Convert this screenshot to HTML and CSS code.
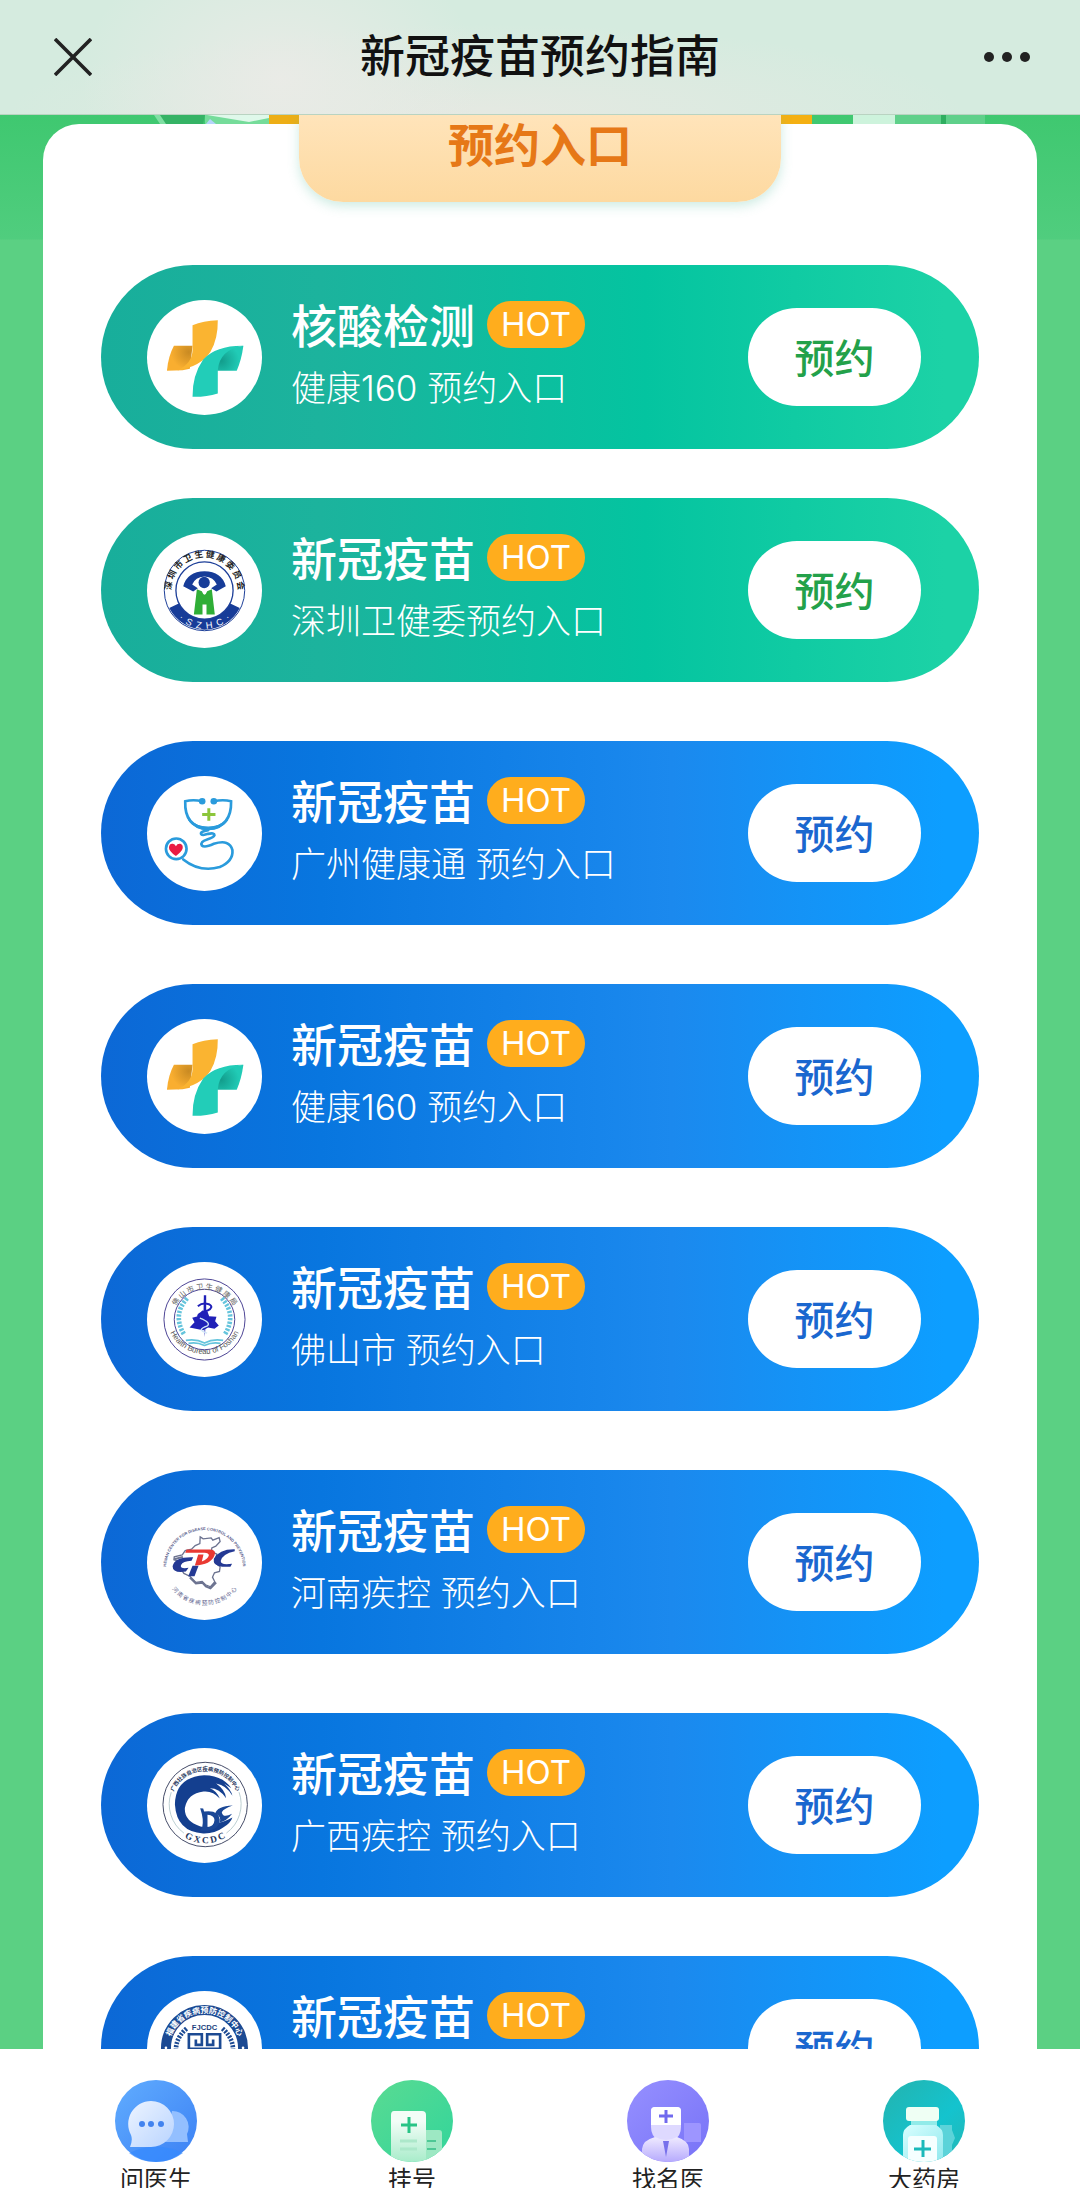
FILE: index.html
```
<!DOCTYPE html>
<html lang="zh-CN">
<head>
    <meta charset="UTF-8">
    <meta name="viewport" content="width=device-width, initial-scale=1.0">
    <title>新冠疫苗预约指南</title>
    <link rel="stylesheet" href="styles.css">
</head>
<body>
    <!-- Shared logo and gradients -->
    <svg class="defs" aria-hidden="true">
        <defs>
            <radialGradient id="goldFold" cx="0.85" cy="0.25" r="0.7">
                <stop offset="0" stop-color="#c98a22"/>
                <stop offset="1" stop-color="#f9ae30"/>
            </radialGradient>
            <radialGradient id="tealFold" cx="0.15" cy="0.6" r="0.7">
                <stop offset="0" stop-color="#129c8b"/>
                <stop offset="1" stop-color="#21cbb6"/>
            </radialGradient>
            <symbol id="logo160" viewBox="21 29 346 346">
                <path d="M102 167 H158 L150 236 L128 240 L81 242 Q85 198 102 167Z" fill="url(#goldFold)"/>
                <path d="M158 105 Q190 91 234 90 Q235 145 212 185 Q183 230 112 241 Q157 220 158 180Z" fill="#fab431"/>
                <path d="M311 167 Q305 211 291 242 H232 V180Z" fill="url(#tealFold)"/>
                <path d="M311 167 Q240 178 234 240 V310 Q198 321 158 320 Q157 256 190 208 Q230 166 311 167Z" fill="#22cdb8"/>
            </symbol>
        </defs>
    </svg>

    <header class="topbar">
        <button class="icon-btn" aria-label="关闭">
            <svg width="38" height="38" viewBox="0 0 38 38"><path d="M1 1 L37 37 M37 1 L1 37" stroke="#222" stroke-width="3.6" fill="none"/></svg>
        </button>
        <h1>新冠疫苗预约指南</h1>
        <button class="icon-btn" aria-label="更多">
            <svg width="48" height="12" viewBox="0 0 48 12" fill="#222"><circle cx="6" cy="6" r="5"/><circle cx="24" cy="6" r="5"/><circle cx="42" cy="6" r="5"/></svg>
        </button>
    </header>

    <main class="content">
        <!-- Bottom edge of the banner -->
        <svg class="banner" viewBox="0 0 1080 9" preserveAspectRatio="none" aria-hidden="true">
            <path d="M154 0h8l6 9h-8z" fill="#7fe0a3"/>
            <path d="M160 0h45l-2 9h-37z" fill="#35b365"/>
            <path d="M205 0h64v9h-64z" fill="#75dc9a"/>
            <path d="M207 0h62v3l-20 4z" fill="#dff8ea"/>
            <path d="M206 9l4-5 6 5z" fill="#b5d4fb"/>
            <path d="M269 0h40v9h-40z" fill="#edae16"/>
            <path d="M771 0h41v9h-41z" fill="#f4b012"/>
            <path d="M853 0h42v9h-42z" fill="#cdf3dc"/>
            <path d="M895 0h90v9h-90z" fill="#5fd08a"/>
            <path d="M941 0h5v9h-5z" fill="#2fae60"/>
        </svg>

        <section class="card">
            <h2 class="tab">预约入口</h2>

            <article class="entry green">
                <svg class="logo"><use href="#logo160"/></svg>
                <div class="info">
                    <h3>核酸检测 <span class="hot">HOT</span></h3>
                    <p>健康160 预约入口</p>
                </div>
                <button class="btn">预约</button>
            </article>

            <article class="entry green">
                <svg class="logo" viewBox="21 24 346 346">
                    <circle cx="194" cy="197" r="121" fill="#fff" stroke="#1d3f99" stroke-width="3"/>
                    <path d="M88 250 A119 119 0 0 0 300 250 L270 235 A85 85 0 0 1 118 235Z" fill="#173c98"/>
                    <circle cx="194" cy="197" r="86" fill="#fff" stroke="#1d3f99" stroke-width="4"/>
                    <path id="szTop" d="M99 228 A100 100 0 1 1 289 228" fill="none"/>
                    <text class="ring-cn sz"><textPath href="#szTop" startOffset="50%">深 圳 市 卫 生 健 康 委 员 会</textPath></text>
                    <path id="szBottom" d="M82 214 A113 113 0 0 0 306 214" fill="none"/>
                    <text class="ring-en szhc"><textPath href="#szBottom" startOffset="50%">·  S  Z  H  C  ·</textPath></text>
                    <path d="M130 184 Q142 140 194 139 Q246 140 258 184 L230 200 L214 190 L231 179 Q222 157 194 155 Q166 157 157 179 L174 190 L160 200Z" fill="#173c98"/>
                    <circle cx="193" cy="173" r="17" fill="#173c98"/>
                    <path d="M171 193 L186 199 Q194 220 202 199 L216 193 L225 269 H200 V239 H188 V269 H162Z" fill="#2fae36"/>
                </svg>
                <div class="info">
                    <h3>新冠疫苗 <span class="hot">HOT</span></h3>
                    <p>深圳卫健委预约入口</p>
                </div>
                <button class="btn">预约</button>
            </article>

            <article class="entry">
                <svg class="logo" viewBox="21 29 346 346" fill="none" stroke="#2a9bdc" stroke-linecap="round">
                    <path d="M187 105 Q160 99 136 105 Q133 183 205 188 Q276 183 274 105 Q250 99 222 105" stroke-width="8"/>
                    <path d="M146 160 Q166 190 205 190 Q244 190 264 160 Q240 183 205 183 Q168 183 146 160Z" fill="#2a9bdc" stroke-width="4"/>
                    <circle cx="187" cy="105" r="10" fill="#2a9bdc" stroke="none"/>
                    <circle cx="222" cy="105" r="10" fill="#2a9bdc" stroke="none"/>
                    <path d="M207 126 V164 M187 145 H227" stroke="#8cc63a" stroke-width="9" stroke-linecap="butt"/>
                    <path d="M205 192 Q180 196 184 204 Q188 209 205 203 Q224 199 224 207 Q222 214 202 220 Q180 227 186 238 Q194 246 222 233 Q270 218 278 252 Q281 285 240 303 Q180 320 130 280" stroke-width="8"/>
                    <circle cx="109" cy="248" r="31" stroke-width="8"/>
                    <path d="M108 270 Q86 254 87 243 Q89 231 99 233 Q105 234 108 240 Q112 232 121 233 Q131 236 128 248 Q124 258 108 270Z" fill="#ea1b43" stroke="none"/>
                </svg>
                <div class="info">
                    <h3>新冠疫苗 <span class="hot">HOT</span></h3>
                    <p>广州健康通 预约入口</p>
                </div>
                <button class="btn">预约</button>
            </article>

            <article class="entry">
                <svg class="logo"><use href="#logo160"/></svg>
                <div class="info">
                    <h3>新冠疫苗 <span class="hot">HOT</span></h3>
                    <p>健康160 预约入口</p>
                </div>
                <button class="btn">预约</button>
            </article>

            <article class="entry">
                <svg class="logo" viewBox="21 22 346 346" fill="none">
                    <circle cx="194" cy="195" r="122" stroke="#4d4596" stroke-width="3"/>
                    <circle cx="194" cy="195" r="91" stroke="#4d4596" stroke-width="3"/>
                    <path id="fsTop" d="M98 182 A98 98 0 0 1 290 182"/>
                    <text class="ring-cn fs"><textPath href="#fsTop" startOffset="50%">佛 山 市 卫 生 健 康 局</textPath></text>
                    <path id="fsBottom" d="M82 206 A114 114 0 0 0 306 206"/>
                    <text class="ring-en fsen"><textPath href="#fsBottom" startOffset="50%">Health Bureau of Foshan</textPath></text>
                    <path d="M142 131 Q97 180 132 239" stroke="#65c4dc" stroke-width="14" stroke-dasharray="7 4"/>
                    <path d="M246 131 Q291 180 256 239" stroke="#65c4dc" stroke-width="14" stroke-dasharray="7 4"/>
                    <path d="M138 258 Q168 252 194 266 Q220 252 250 258 M146 267 Q170 262 194 273 Q218 262 242 267" stroke="#65c4dc" stroke-width="5"/>
                    <path d="M149 219 L164 203 L157 190 L174 185 L187 168 L203 171 L208 185 L230 187 L226 200 L237 213 L224 223 L205 219 L190 227Z" fill="#2020b8"/>
                    <path d="M192 122 H199 V180 L195 248 L191 180Z" fill="#2020b8"/>
                    <path d="M174 155 Q188 143 207 149 Q224 158 203 168 Q170 178 176 187 Q180 192 207 194" stroke="#2020b8" stroke-width="6"/>
                    <path d="M180 191 Q214 204 203 214 Q185 220 184 226 Q188 232 202 236" stroke="#cfe5f7" stroke-width="4"/>
                </svg>
                <div class="info">
                    <h3>新冠疫苗 <span class="hot">HOT</span></h3>
                    <p>佛山市 预约入口</p>
                </div>
                <button class="btn">预约</button>
            </article>

            <article class="entry">
                <svg class="logo" viewBox="21 29 346 346" fill="none">
                    <path id="hnTop" d="M80 242 A116 116 0 1 1 308 242"/>
                    <text class="ring-en hnen"><textPath href="#hnTop" startOffset="50%">HENAN CENTER FOR DISEASE CONTROL AND PREVENTION</textPath></text>
                    <path id="hnBottom" d="M84 264 A125 125 0 0 0 304 264"/>
                    <text class="ring-cn hn"><textPath href="#hnBottom" startOffset="50%">河 南 省 疾 病 预 防 控 制 中 心</textPath></text>
                    <path d="M181 125 L190 131 L214 128 L219 135 L238 127 L241 139 L228 153 L216 158 L215 169 L231 177 L225 202 L241 215 L239 229 L224 233 L218 246 L225 260 L212 275 L197 269 L187 259 L168 262 L151 244 L132 235 L119 215 L121 199 L102 194 L103 185 L127 179 L136 166 L155 162 L166 151 L180 145Z" fill="#fff" stroke="#6c7390" stroke-width="4"/>
                    <path d="M103 192 L129 185 M150 247 L168 265 L188 263 L198 274 L212 280 L229 262" stroke="#6c7390" stroke-width="6"/>
                    <path d="M160 186 Q104 184 98 213 Q98 235 138 229 L146 218 Q120 222 123 210 Q129 198 155 197Z" fill="#243994"/>
                    <path d="M158 212 H176 L164 243 H145Z" fill="#243994"/>
                    <path d="M140 163 H211 Q231 165 224 181 Q213 209 165 211 L175 178 H191 L186 199 Q204 192 207 181 Q207 173 194 173 H136Z" fill="#e93932"/>
                    <path d="M285 162 Q238 161 222 191 Q218 212 247 215 H272 L277 206 Q241 211 243 197 Q248 176 285 168Z" fill="#243994"/>
                </svg>
                <div class="info">
                    <h3>新冠疫苗 <span class="hot">HOT</span></h3>
                    <p>河南疾控 预约入口</p>
                </div>
                <button class="btn">预约</button>
            </article>

            <article class="entry">
                <svg class="logo" viewBox="21 22 346 346" fill="none">
                    <circle cx="196" cy="192" r="127" stroke="#454c68" stroke-width="3"/>
                    <path d="M94 155 A108 108 0 0 0 132 278 M298 155 A108 108 0 0 1 260 278" stroke="#bccfd1" stroke-width="3"/>
                    <path id="gxTop" d="M101 154 A103 103 0 0 1 291 154"/>
                    <text class="ring-cn gx"><textPath href="#gxTop" startOffset="50%">广西壮族自治区疾病预防控制中心</textPath></text>
                    <path id="gxBottom" d="M90 240 A116 116 0 0 0 302 240"/>
                    <text class="ring-en gxen"><textPath href="#gxBottom" startOffset="50%">G X C D C</textPath></text>
                    <path d="M275 143 Q247 104 193 104 Q106 110 105 192 Q110 274 190 279 Q225 280 249 262 Q273 248 278 231 Q252 244 239 246 Q216 264 182 258 Q132 242 135 202 Q143 159 191 153 Q219 150 240 174 Q230 150 210 143 Q239 143 259 173 Q257 149 229 129 Q260 134 278 166 Q273 146 253 129Z" fill="#143f8f"/>
                    <path d="M181 203 L190 204 L193 213 Q237 207 240 238 Q239 269 199 271 H181 L187 261 Q193 238 181 203Z M203 223 V261 Q223 258 224 239 Q224 225 203 223Z" fill="#1a4796" fill-rule="evenodd"/>
                    <path d="M279 195 Q231 197 226 220 Q247 228 239 246 Q260 243 277 220 Q249 234 246 215 Q252 204 279 195Z" fill="#1a4796"/>
                </svg>
                <div class="info">
                    <h3>新冠疫苗 <span class="hot">HOT</span></h3>
                    <p>广西疾控 预约入口</p>
                </div>
                <button class="btn">预约</button>
            </article>

            <article class="entry">
                <svg class="logo" viewBox="0 0 346 346" fill="none">
                    <circle cx="173" cy="173" r="116" stroke="#1c4a93" stroke-width="30"/>
                    <path id="fjTop" d="M66 173 A107 107 0 0 1 280 173"/>
                    <text class="ring-cn fj"><textPath href="#fjTop" startOffset="50%">福建省疾病预防控制中心</textPath></text>
                    <circle cx="57" cy="171" r="4" fill="#fff"/>
                    <circle cx="289" cy="171" r="4" fill="#fff"/>
                    <text class="ring-en fjen" x="173" y="116">FJCDC</text>
                    <path d="M119 113 Q76 150 91 205 M227 113 Q270 150 255 205" stroke="#1c4a93" stroke-width="14" stroke-dasharray="6 4"/>
                    <path d="M126 186 V130 H165 V162 H147 V146 M220 186 V130 H181 V162 H199 V146 M126 174 H220 M141 186 H205 V220 H141Z" stroke="#1c4a93" stroke-width="8"/>
                </svg>
                <div class="info">
                    <h3>新冠疫苗 <span class="hot">HOT</span></h3>
                    <p>福建疾控 预约入口</p>
                </div>
                <button class="btn">预约</button>
            </article>
        </section>
    </main>

    <nav class="bottom-nav">
        <a href="#">
            <svg viewBox="0 0 82 82">
                <defs>
                    <linearGradient id="blueBg" x1="0" y1="0" x2="1" y2="1"><stop offset="0" stop-color="#61adff"/><stop offset="1" stop-color="#3b80f4"/></linearGradient>
                    <linearGradient id="bubble" x1="0" y1="0" x2="1" y2="1"><stop offset="0" stop-color="#edf4ff"/><stop offset="1" stop-color="#b9d4ff"/></linearGradient>
                </defs>
                <circle cx="41" cy="41" r="41" fill="url(#blueBg)"/>
                <path d="M14 73 Q41 60 68 73 Q56 82 41 82 Q25 82 14 73Z" fill="#358aff" opacity="0.7"/>
                <path d="M57 31 A16 16 0 0 1 72 54 L73 62 H50Z" fill="#93bfff"/>
                <path d="M36 21 A23 23 0 1 1 36 67 H15 Q18 60 16 55 A23 23 0 0 1 36 21Z" fill="url(#bubble)"/>
                <g fill="#4283ef"><circle cx="27" cy="44" r="3"/><circle cx="36" cy="44" r="3"/><circle cx="46" cy="44" r="3"/></g>
            </svg>
            <span>问医生</span>
        </a>
        <a href="#">
            <svg viewBox="0 0 82 82">
                <defs>
                    <linearGradient id="greenBg" x1="0" y1="0" x2="1" y2="1"><stop offset="0" stop-color="#5adb92"/><stop offset="1" stop-color="#32d59b"/></linearGradient>
                    <linearGradient id="paper" x1="0" y1="0" x2="0" y2="1"><stop offset="0.2" stop-color="#f3fdf7"/><stop offset="1" stop-color="#a8ecca"/></linearGradient>
                    <clipPath id="round"><circle cx="41" cy="41" r="41"/></clipPath>
                </defs>
                <g clip-path="url(#round)">
                    <path d="M0 0h82v82H0z" fill="url(#greenBg)"/>
                    <path d="M54 50h14q3 0 3 3v29H54z" fill="#9de8c3"/>
                    <path d="M23 31h28q4 0 4 4v47H20V35q0-4 3-4z" fill="url(#paper)"/>
                    <path d="M38 37v16M30 45h16" stroke="#28c486" stroke-width="3"/>
                    <path d="M29 61h17M29 69h17" stroke="#ace8ca" stroke-width="3"/>
                    <path d="M56 61h9M56 69h9" stroke="#4ec895" stroke-width="2"/>
                </g>
            </svg>
            <span>挂号</span>
        </a>
        <a href="#">
            <svg viewBox="0 0 82 82">
                <defs>
                    <linearGradient id="purpleBg" x1="0" y1="0" x2="1" y2="1"><stop offset="0" stop-color="#9690ff"/><stop offset="1" stop-color="#7772f7"/></linearGradient>
                    <linearGradient id="coat" x1="0" y1="0" x2="0" y2="1"><stop offset="0" stop-color="#efeaff"/><stop offset="1" stop-color="#b6aafd"/></linearGradient>
                </defs>
                <g clip-path="url(#round)">
                    <path d="M0 0h82v82H0z" fill="url(#purpleBg)"/>
                    <path d="M57 43h15q2 0 2 2v17H57z" fill="#9d95ff"/>
                    <path d="M24 31q0-4 4-4h22q4 0 4 4v16q0 9-7 13H31q-7-4-7-13z" fill="#ded9ff"/>
                    <path d="M24 31q0-4 4-4h22q4 0 4 4v14H24z" fill="#fff"/>
                    <path d="M28 57q11 6 22 0 12 4 12 12v13H15V69q1-9 13-12z" fill="url(#coat)"/>
                    <path d="M36 61h6l-3 16z" fill="#7770eb"/>
                    <path d="M39 30v13M32 36h14" stroke="#716aee" stroke-width="3"/>
                </g>
            </svg>
            <span>找名医</span>
        </a>
        <a href="#">
            <svg viewBox="0 0 82 82">
                <defs>
                    <linearGradient id="tealBg" x1="0" y1="0" x2="1" y2="1"><stop offset="0" stop-color="#24b3ae"/><stop offset="0.6" stop-color="#14c3ce"/><stop offset="1" stop-color="#25b7b5"/></linearGradient>
                    <linearGradient id="bottle" x1="0" y1="0" x2="1" y2="1"><stop offset="0" stop-color="#d9ffff"/><stop offset="1" stop-color="#90e8ed"/></linearGradient>
                </defs>
                <g clip-path="url(#round)">
                    <path d="M0 0h82v82H0z" fill="url(#tealBg)"/>
                    <path d="M57 45h12v5l3 8-3 7v17H57z" fill="#5bd3d9"/>
                    <rect x="28" y="39" width="26" height="8" fill="#91ebe9"/>
                    <rect x="23" y="27" width="33" height="14" rx="3" fill="#effff4"/>
                    <path d="M27 45h26q7 4 7 10v27H20V55q0-6 7-10z" fill="url(#bottle)"/>
                    <rect x="25" y="56" width="29" height="26" rx="3" fill="#f5ffff"/>
                    <path d="M40 60v17M31 69h17" stroke="#1ab9ba" stroke-width="3"/>
                </g>
            </svg>
            <span>大药房</span>
        </a>
    </nav>
</body>
</html>
```

FILE: styles.css
```
/* General styling */
* {
    margin: 0;
    padding: 0;
    box-sizing: border-box;
}
body {
    display: flex;
    flex-direction: column;
    height: 100vh;
    overflow: hidden;
    font-family: Inter, 'Noto Sans CJK SC', sans-serif;
    background: #fff;
    color: #111;
}
button {
    font-family: inherit;
    border: none;
    background: none;
    cursor: pointer;
}
.defs {
    position: absolute;
    width: 0;
    height: 0;
}

/* Top bar */
.topbar {
    display: flex;
    align-items: center;
    justify-content: space-between;
    flex: none;
    height: 115px;
    padding: 0 49px;
    background:
        radial-gradient(ellipse 200px 150px at 26% 70%, rgba(235, 235, 231, 0.9), rgba(235, 235, 231, 0)),
        radial-gradient(ellipse 480px 90px at 45% 100%, #e5e9e2, rgba(229, 233, 226, 0)),
        #d5ebdf;
    border-bottom: 1px solid #b9d3c1;
}
.topbar h1 {
    font-size: 45px;
    font-weight: 500;
    line-height: 60px;
}
.icon-btn {
    display: flex;
    align-items: center;
    justify-content: center;
    width: 48px;
    height: 60px;
}

.content {
    flex: 1;
    min-height: 0;
    overflow: hidden;
    background: linear-gradient(#3fc870 0, #50cd7e 124px, #5bd083 125px, #5bd083 100%);
}
.banner {
    display: block;
    width: 100%;
    height: 9px;
}
.card {
    position: relative;
    margin: 0 43px;
    padding: 141px 58px 59px;
    background: #fff;
    border-radius: 36px 36px 0 0;
}
.tab {
    position: absolute;
    top: -9px;
    left: 50%;
    width: 482px;
    height: 87px;
    transform: translateX(-50%);
    border-radius: 0 0 44px 44px;
    background: linear-gradient(#ffe4ba, #fdd9a0);
    box-shadow: 0 4px 12px rgba(90, 190, 160, 0.3);
    color: #e67817;
    font-size: 46px;
    font-weight: 700;
    line-height: 60px;
    text-align: center;
}

/* Booking entries */
.entry {
    display: flex;
    align-items: center;
    height: 184px;
    margin-bottom: 59px;
    padding: 0 58px 0 46px;
    border-radius: 92px;
    background: linear-gradient(to right, #0c68d6, #0876df 25%, #1b89ee 65%, #0d9eff 96%);
    color: #fff;
}
.entry.green {
    background: linear-gradient(to right, #18ae9b, #1cb39d 25%, #04c4a0 62%, #1cd2a6 96%);
}
.entry.green:has(+ .green) {
    margin-bottom: 49px;
}
.logo {
    flex: none;
    width: 115px;
    height: 115px;
    border-radius: 50%;
    background: #fff;
}
.info {
    flex: 1;
    margin-left: 29px;
}
.info h3 {
    display: flex;
    align-items: center;
    gap: 12px;
    font-size: 46px;
    font-weight: 500;
    line-height: 62px;
}
.info p {
    font-size: 35px;
    font-weight: 300;
    line-height: 62px;
}
.hot {
    width: 98px;
    height: 47px;
    margin-bottom: 4px;
    border-radius: 24px;
    background: #ffad1d;
    font-size: 33px;
    font-weight: 400;
    line-height: 46px;
    text-align: center;
}
.btn {
    width: 173px;
    height: 98px;
    padding-bottom: 2px;
    border-radius: 49px;
    background: #fff;
    color: #1a67cf;
    font-size: 40px;
    font-weight: 500;
}
.green .btn {
    color: #23a14a;
}

/* Lettering round the logos */
.ring-cn, .ring-en {
    text-anchor: middle;
    stroke: none;
    font-family: 'Noto Sans CJK SC', sans-serif;
}
.ring-en {
    font-family: 'Liberation Sans', sans-serif;
}
.sz {
    font-size: 26px;
    font-weight: 700;
    fill: #222;
}
.szhc {
    font-size: 28px;
    fill: #fff;
    white-space: pre;
}
.fs {
    font-size: 22px;
    fill: #666;
}
.fsen {
    font-size: 23px;
    fill: #555;
}
.hnen {
    font-size: 12px;
    font-weight: 700;
    fill: #59608c;
}
.hn {
    font-size: 17px;
    fill: #59608c;
}
.gx {
    font-size: 16px;
    font-weight: 700;
    fill: #26365c;
}
.gxen {
    font-family: 'Liberation Serif', serif;
    font-size: 28px;
    font-weight: 700;
    fill: #26365c;
}
.fj {
    font-size: 24px;
    font-weight: 700;
    fill: #fff;
}
.fjen {
    font-size: 23px;
    font-weight: 700;
    fill: #1c3f7d;
}

/* Bottom navigation */
.bottom-nav {
    display: flex;
    flex: none;
    height: 139px;
    padding: 31px 28px 0;
    overflow: hidden;
    background: #fff;
}
.bottom-nav a {
    display: flex;
    flex: 1;
    flex-direction: column;
    align-items: center;
    color: #222;
    font-size: 24px;
    line-height: 36px;
    text-decoration: none;
}
.bottom-nav svg {
    flex: none;
    width: 82px;
    height: 82px;
}
```
